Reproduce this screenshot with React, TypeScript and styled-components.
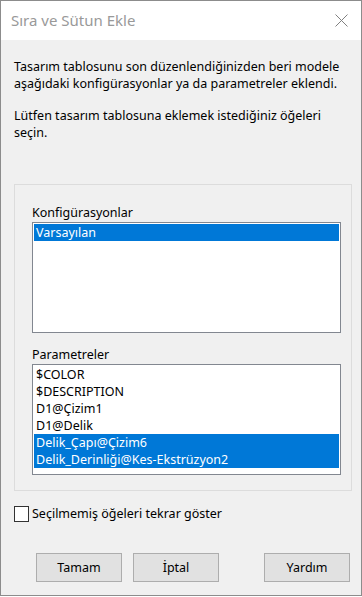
import React from "react";
import styled, { createGlobalStyle } from "styled-components";

const Global = createGlobalStyle`
  html, body { margin: 0; padding: 0; background: #ffffff; }
  body { font-family: "Noto Sans", "Open Sans", sans-serif; font-size: 12.5px; color: #000; }
`;

const Window = styled.div`
  box-sizing: border-box;
  width: 362px;
  height: 596px;
  border: 1px solid #8c8c8c;
  background: #f0f0f0;
  display: flex;
  flex-direction: column;
`;

const TitleBar = styled.div`
  height: 39px;
  background: #ffffff;
  display: flex;
  align-items: center;
  justify-content: space-between;
  padding: 0 13px 0 10px;
`;

const Title = styled.div`
  font-size: 15px;
  color: #999999;
  padding-bottom: 1px;
`;

const CloseIcon = () => (
  <svg width="13" height="13" viewBox="0 0 13 13">
    <path d="M0.5 0.5 L12.5 12.5 M12.5 0.5 L0.5 12.5" stroke="#808080" strokeWidth="1" fill="none" />
  </svg>
);

const Body = styled.div`
  flex: 1;
  display: flex;
  flex-direction: column;
  padding: 18px 9px 0 13px;
`;

const Paragraph = styled.p<{ $gap?: number }>`
  margin: 0 0 ${(p) => p.$gap ?? 0}px 0;
  padding-right: 6px;
  line-height: 17px;
`;

const GroupBox = styled.div`
  border: 1px solid #dcdcdc;
  padding: 19px 10px 15px 17px;
  display: flex;
  flex-direction: column;
`;

const Label = styled.div<{ $top?: number }>`
  line-height: 17px;
  margin-top: ${(p) => p.$top ?? 0}px;
  margin-bottom: 1px;
`;

const ListBox = styled.div`
  box-sizing: border-box;
  height: 111px;
  border: 1px solid #828790;
  background: #ffffff;
  padding: 1px;
  display: flex;
  flex-direction: column;
`;

const Item = styled.div<{ $selected?: boolean }>`
  height: 17px;
  line-height: 17px;
  padding-left: 2px;
  white-space: nowrap;
  background: ${(p) => (p.$selected ? "#0078d7" : "transparent")};
  color: ${(p) => (p.$selected ? "#ffffff" : "#000000")};
`;

const CheckRow = styled.label`
  display: flex;
  align-items: center;
  gap: 3px;
  margin-top: 14px;
  height: 17px;
`;

const Box = styled.span`
  box-sizing: border-box;
  width: 15px;
  height: 16px;
  border: 1px solid #333333;
  background: #ffffff;
`;

const ButtonRow = styled.div`
  display: flex;
  margin-top: 31px;
  padding-left: 22px;
`;

const Button = styled.button<{ $ml?: number }>`
  box-sizing: border-box;
  width: 86px;
  height: 29px;
  margin-left: ${(p) => p.$ml ?? 0}px;
  background: #e1e1e1;
  border: 1px solid #adadad;
  font-family: inherit;
  font-size: 12.5px;
  color: #000;
  padding: 0;
`;

export default function App() {
  const params = [
    { t: "$COLOR" },
    { t: "$DESCRIPTION" },
    { t: "D1@Çizim1" },
    { t: "D1@Delik" },
    { t: "Delik_Çapı@Çizim6", s: true },
    { t: "Delik_Derinliği@Kes-Ekstrüzyon2", s: true },
  ];
  return (
    <>
      <Global />
      <Window>
        <TitleBar>
          <Title>Sıra ve Sütun Ekle</Title>
          <CloseIcon />
        </TitleBar>
        <Body>
          <Paragraph $gap={15}>
            Tasarım tablosunu son düzenlendiğinizden beri modele aşağıdaki konfigürasyonlar ya da parametreler eklendi.
          </Paragraph>
          <Paragraph $gap={43}>
            Lütfen tasarım tablosuna eklemek istediğiniz öğeleri seçin.
          </Paragraph>
          <GroupBox>
            <Label>Konfigürasyonlar</Label>
            <ListBox>
              <Item $selected>Varsayılan</Item>
            </ListBox>
            <Label $top={13}>Parametreler</Label>
            <ListBox>
              {params.map((p) => (
                <Item key={p.t} $selected={p.s}>
                  {p.t}
                </Item>
              ))}
            </ListBox>
          </GroupBox>
          <CheckRow>
            <Box />
            <span>Seçilmemiş öğeleri tekrar göster</span>
          </CheckRow>
          <ButtonRow>
            <Button>Tamam</Button>
            <Button $ml={11}>İptal</Button>
            <Button $ml={45}>Yardım</Button>
          </ButtonRow>
        </Body>
      </Window>
    </>
  );
}
